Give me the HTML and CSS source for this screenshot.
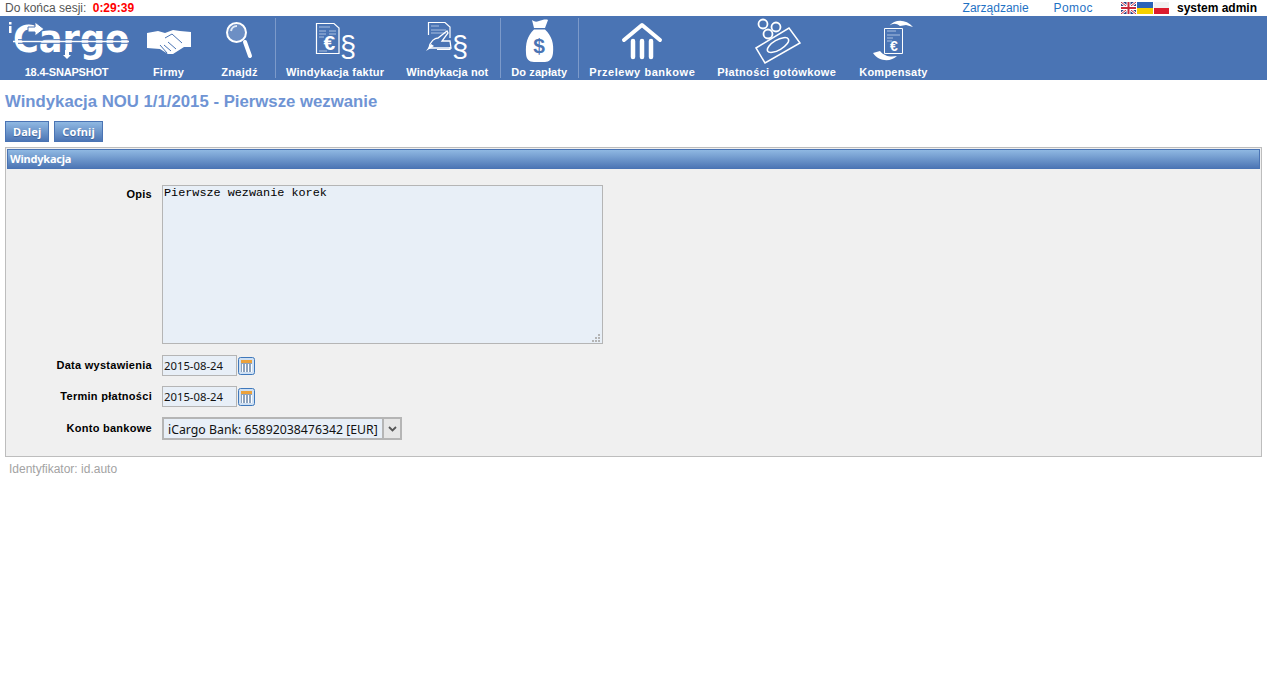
FILE: index.html
```html
<!DOCTYPE html>
<html lang="pl">
<head>
    <meta charset="UTF-8">
    <meta name="viewport" content="width=device-width, initial-scale=1.0">
    <title>Windykacja NOU 1/1/2015</title>
    <link rel="stylesheet" href="styles.css">
</head>
<body>
    <div class="topbar">
        <div class="session">Do końca sesji: <span class="timer">0:29:39</span></div>
        <div class="topbar-right">
            <a class="toplink toplink-admin" href="#">Zarządzanie</a>
            <a class="toplink toplink-help" href="#">Pomoc</a>
            <div class="flags">
                <svg width="15" height="12" viewBox="0 0 15 12">
                    <rect width="15" height="12" fill="#2b3f86"/>
                    <path d="M0 0L15 12M15 0L0 12" stroke="#fff" stroke-width="2.6"/>
                    <path d="M0 0L15 12M15 0L0 12" stroke="#c8283c" stroke-width="1"/>
                    <path d="M7.5 0V12M0 6H15" stroke="#fff" stroke-width="4"/>
                    <path d="M7.5 0V12M0 6H15" stroke="#c8283c" stroke-width="2"/>
                </svg>
                <svg width="16" height="12" viewBox="0 0 16 12">
                    <rect width="16" height="6" fill="#2a63b8"/>
                    <rect y="6" width="16" height="6" fill="#f5d000"/>
                </svg>
                <svg width="15" height="12" viewBox="0 0 15 12">
                    <rect width="15" height="6" fill="#f1f1f1"/>
                    <rect y="6" width="15" height="6" fill="#dc1c2e"/>
                </svg>
            </div>
            <span class="username">system admin</span>
        </div>
    </div>

    <nav class="nav">
        <a class="nav-item nav-logo" href="#">
            <svg class="nav-icon" width="132" height="48" viewBox="0 0 132 48">
                <rect x="8" y="6" width="2.5" height="2.5" fill="#fff"/>
                <rect x="8" y="10" width="2.5" height="7" fill="#fff"/>
                <text class="logo-text" transform="translate(12 36) scale(0.88 0.95)">Cargo</text>
                <path d="M27 11H34V6L43 13L34 20V16H27Z" fill="#fff" stroke="#4a74b4"/>
                <path d="M64 34H68V39H70L66 43L62 39H64Z" fill="#fff"/>
                <path d="M12 25.5H128" stroke="#fff" stroke-width="1.5"/>
                <path d="M17 23.7H127M17 27.3H127" stroke="#4a74b4"/>
            </svg>
            <span class="nav-label nav-label-caps">18.4-SNAPSHOT</span>
        </a>
        <a class="nav-item nav-narrow" href="#">
            <svg class="nav-icon" width="50" height="48" viewBox="0 0 50 48">
                <path d="M3 17L14 15L21 17L29 14L36 15L47 16V31L40 31L29 38L24 38L16 33L3 32Z" fill="#fff"/>
                <path d="M21 22L28 18L38 27M24 26L32 33M20 29L27 35M16 29L23 37" fill="none" stroke="#4a74b4" stroke-width="1"/>
            </svg>
            <span class="nav-label">Firmy</span>
        </a>
        <a class="nav-item nav-narrow" href="#">
            <svg class="nav-icon" width="40" height="48" viewBox="0 0 40 48">
                <circle cx="16.500" cy="16.500" r="9.500" fill="#6d8fc4" stroke="#fff" stroke-width="2"/>
                <path d="M11 15A6 6 0 0 1 17 10" fill="none" stroke="#dfe8f4" stroke-width="2"/>
                <path d="M25 26L30 40" stroke="#fff" stroke-width="4" stroke-linecap="round"/>
            </svg>
            <span class="nav-label">Znajdź</span>
        </a>
        <span class="nav-sep"></span>
        <a class="nav-item" href="#">
            <svg class="nav-icon" width="60" height="48" viewBox="0 0 60 48">
                <path d="M11.5 7.5H29L34 12V37.5H11.5Z" fill="#4a74b4" stroke="#fff" stroke-width="1.2"/>
                <path d="M14 11H25M14 15H21M24 15H31M14 18H21M24 18H31M14 21H19M14 35H22" stroke="#a9bfe0"/>
                <text class="icon-euro" x="18.500" y="34">€</text>
                <text class="icon-para" x="35" y="41">§</text>
            </svg>
            <span class="nav-label">Windykacja faktur</span>
        </a>
        <a class="nav-item nav-item-notes" href="#">
            <svg class="nav-icon" width="60" height="48" viewBox="0 0 60 48">
                <path d="M11.5 19V6.5H28L33 11V22M33 31V33.5H20" fill="none" stroke="#fff" stroke-width="1.2"/>
                <path d="M14 10H22M14 14H29M14 17H29" stroke="#a9bfe0"/>
                <path d="M12 32C13 25 18 22 21 22L30 15L31 17L25 25H33L34 32Z" fill="none" stroke="#fff" stroke-width="1.3"/>
                <path d="M9 35L14 28L17 30Z" fill="#fff"/>
                <text class="icon-para" x="35" y="41">§</text>
            </svg>
            <span class="nav-label nav-label-tight">Windykacja not</span>
        </a>
        <span class="nav-sep"></span>
        <a class="nav-item" href="#">
            <svg class="nav-icon" width="40" height="48" viewBox="0 0 40 48">
                <path d="M13 4C16 6 17 6 20 5C23 4 27 3 29 4L26 12H15Z" fill="#fff"/>
                <path d="M15 13.5H26C33 20 35 28 34 37C33.500 43 30 46 26 46H15C10 46 7 43 7 37C6.500 28 8 20 15 13.500Z" fill="#fff"/>
                <text class="icon-dollar" x="20" y="37">$</text>
            </svg>
            <span class="nav-label nav-label-tight">Do zapłaty</span>
        </a>
        <span class="nav-sep"></span>
        <a class="nav-item" href="#">
            <svg class="nav-icon" width="50" height="48" viewBox="0 0 50 48">
                <path d="M7 24L25 9L43 24" fill="none" stroke="#fff" stroke-width="4" stroke-linecap="round" stroke-linejoin="round"/>
                <path d="M16 25V41M25 25V41M34 25V41" stroke="#fff" stroke-width="4.500" stroke-linecap="round"/>
            </svg>
            <span class="nav-label nav-label-wide">Przelewy bankowe</span>
        </a>
        <a class="nav-item" href="#">
            <svg class="nav-icon" width="60" height="48" viewBox="0 0 60 48">
                <circle cx="16" cy="8" r="4.500" fill="none" stroke="#fff" stroke-width="1.800"/>
                <circle cx="29" cy="11" r="4.500" fill="none" stroke="#fff" stroke-width="1.800"/>
                <circle cx="21" cy="18" r="4.500" fill="none" stroke="#fff" stroke-width="1.800"/>
                <path d="M9 32L42 12L53 27L18 47Z" fill="none" stroke="#fff" stroke-width="1.500"/>
                <ellipse cx="31" cy="29" rx="12" ry="5" transform="rotate(-30 31 29)" fill="none" stroke="#fff" stroke-width="1.500"/>
            </svg>
            <span class="nav-label nav-label-mid">Płatności gotówkowe</span>
        </a>
        <a class="nav-item nav-item-last" href="#">
            <svg class="nav-icon" width="60" height="48" viewBox="0 0 60 48">
                <path d="M21.500 12.500H39.500V37.500H21.500Z" fill="#4a74b4" stroke="#fff"/>
                <path d="M24 15H33M24 19H37M24 22H30M24 25H29" stroke="#a9bfe0"/>
                <text class="icon-euro icon-euro-small" x="27" y="35">€</text>
                <path d="M26 10C32 3 43 3 50 11L43 9L37 10C33 7 30 7 26 10Z" fill="#fff"/>
                <path d="M10 37L17 35C22 41 28 41 34 40C28 46 16 46 10 37Z" fill="#fff"/>
            </svg>
            <span class="nav-label">Kompensaty</span>
        </a>
    </nav>

    <main class="content">
        <h1 class="page-title">Windykacja NOU 1/1/2015 - Pierwsze wezwanie</h1>

        <div class="actions">
            <button class="btn">Dalej</button>
            <button class="btn">Cofnij</button>
        </div>

        <section class="panel">
            <h2 class="panel-header">Windykacja</h2>
            <form class="form">
                <label class="form-label form-label-top">Opis</label>
                <div class="textarea-wrap">
                    <textarea class="textarea" spellcheck="false">Pierwsze wezwanie korek</textarea>
                    <svg class="grip" width="8" height="8" viewBox="0 0 8 8">
                        <path d="M6 0h2v2h-2zM3 3h2v2h-2zM6 3h2v2h-2zM0 6h2v2h-2zM3 6h2v2h-2zM6 6h2v2h-2z" fill="#b4b4b4"/>
                    </svg>
                </div>

                <label class="form-label">Data wystawienia</label>
                <div class="date-field">
                    <input class="input" type="text" value="2015-08-24">
                    <svg class="calendar" width="17" height="18" viewBox="0 0 17 18">
                        <rect x="0.500" y="0.500" width="16" height="17" rx="2" fill="#cfe0f3" stroke="#3f78bb"/>
                        <rect x="3" y="3" width="11" height="3" fill="#eda23a"/>
                        <rect x="3" y="6" width="11" height="9" fill="#8ea3bd"/>
                        <path d="M4.500 7V15M7.500 7V15M10.500 7V15M13.500 7V15" stroke="#fff"/>
                    </svg>
                </div>

                <label class="form-label">Termin płatności</label>
                <div class="date-field">
                    <input class="input" type="text" value="2015-08-24">
                    <svg class="calendar" width="17" height="18" viewBox="0 0 17 18">
                        <rect x="0.500" y="0.500" width="16" height="17" rx="2" fill="#cfe0f3" stroke="#3f78bb"/>
                        <rect x="3" y="3" width="11" height="3" fill="#eda23a"/>
                        <rect x="3" y="6" width="11" height="9" fill="#8ea3bd"/>
                        <path d="M4.500 7V15M7.500 7V15M10.500 7V15M13.500 7V15" stroke="#fff"/>
                    </svg>
                </div>

                <label class="form-label">Konto bankowe</label>
                <div class="select-box">
                    <span class="select-value">iCargo Bank: 65892038476342 [EUR]</span>
                    <span class="select-arrow">
                        <svg width="9" height="6" viewBox="0 0 9 6"><path d="M1 1L4.500 4.500L8 1" fill="none" stroke="#555" stroke-width="1.800"/></svg>
                    </span>
                </div>
            </form>
        </section>

        <div class="identifier">Identyfikator: id.auto</div>
    </main>
</body>
</html>
```

FILE: styles.css
```css
body {
  margin: 0;
  background-color: #fff;
  font-family: 'Liberation Sans', Arial, sans-serif;
  font-size: 12px;
  color: #000;
}

a {
  text-decoration: none;
}

/* top strip */
.topbar {
  display: flex;
  justify-content: space-between;
  align-items: center;
  height: 16px;
  padding: 0 10px 0 5px;
}

.session {
  color: #555;
}

.timer {
  margin-left: 3px;
  color: #f00;
  font-weight: bold;
}

.topbar-right {
  display: flex;
  align-items: center;
}

.toplink {
  color: #1f72c4;
}

.toplink-admin {
  margin-right: 25px;
}

.toplink-help {
  margin-right: 28px;
  letter-spacing: 0.4px;
}

.flags {
  display: flex;
  gap: 1px;
  margin-right: 8px;
}

.username {
  font-weight: bold;
}

/* main navigation */
.nav {
  display: flex;
  height: 64px;
  background-color: #4a74b4;
}

.nav-item {
  display: flex;
  flex-direction: column;
  align-items: center;
  padding: 0 11px;
  color: #fff;
}

.nav-logo {
  width: 133px;
  padding: 0;
}

.nav-narrow {
  width: 71px;
  padding: 0;
}

.nav-item-notes {
  padding-right: 12px;
}

.nav-item-last {
  margin-left: 1px;
}

.nav-icon {
  display: block;
  height: 48px;
  flex: none;
}

.nav-label {
  margin-top: 2px;
  font-size: 11px;
  line-height: 13px;
  font-weight: bold;
  letter-spacing: 0.25px;
  white-space: nowrap;
}

.nav-label-caps {
  letter-spacing: -0.2px;
}

.nav-label-tight {
  letter-spacing: 0.1px;
}

.nav-label-mid {
  letter-spacing: 0.37px;
}

.nav-label-wide {
  letter-spacing: 0.55px;
}

.nav-sep {
  width: 1px;
  margin: 2px -1px 2px 0;
  background-color: #7c9aca;
}

.logo-text {
  font-family: 'DejaVu Sans', sans-serif;
  font-size: 40px;
  font-weight: bold;
  fill: #fff;
}

.icon-euro {
  font-family: 'Liberation Sans', sans-serif;
  font-size: 21px;
  font-weight: bold;
  fill: #fff;
}

.icon-euro-small {
  font-size: 14px;
}

.icon-para {
  font-family: 'Liberation Sans', sans-serif;
  font-size: 29px;
  fill: #fff;
}

.icon-dollar {
  font-family: 'Liberation Sans', sans-serif;
  font-size: 21px;
  font-weight: bold;
  fill: #4a74b4;
  text-anchor: middle;
}

/* page content */
.content {
  padding: 0 5px;
}

.page-title {
  margin: 12px 0 0;
  font-size: 16.750px;
  line-height: 19px;
  font-weight: bold;
  color: #6f94d4;
}

.actions {
  display: flex;
  gap: 5px;
  margin-top: 10px;
}

.btn {
  height: 21px;
  padding: 0 7px;
  border: 1px solid #4a74b4;
  background: linear-gradient(#8fb8e2, #4d76b5);
  color: #fff;
  font-family: 'Noto Sans', sans-serif;
  font-size: 11px;
  font-weight: bold;
  letter-spacing: 0.1px;
  text-shadow: 0 1px 1px #3a5f99;
}

.panel {
  margin-top: 5px;
  padding: 1px;
  border: 1px solid #bdbdbd;
  background-color: #f0f0f0;
}

.panel-header {
  margin: 0;
  height: 18px;
  padding-left: 2px;
  border: 1px solid #4a74b4;
  background: linear-gradient(#8fb8e2, #4d76b5);
  color: #fff;
  font-family: 'Noto Sans', sans-serif;
  font-size: 11px;
  line-height: 18px;
  font-weight: bold;
  letter-spacing: -0.2px;
}

.form {
  display: grid;
  grid-template-columns: 145px auto;
  column-gap: 10px;
  row-gap: 10px;
  justify-content: start;
  align-items: center;
  padding: 16px 0 15px;
}

.form-label {
  margin-bottom: 2px;
  text-align: right;
  font-size: 11px;
  font-weight: bold;
  letter-spacing: 0.28px;
}

.form-label-top {
  align-self: start;
  margin-top: 3px;
}

.textarea-wrap {
  position: relative;
  margin-bottom: 1px;
}

.textarea {
  display: block;
  box-sizing: border-box;
  width: 441px;
  height: 159px;
  padding: 0 1px;
  border: 1px solid #b5b5b5;
  border-radius: 0;
  background-color: #e8eff7;
  font-family: 'Liberation Mono', monospace;
  font-size: 11.800px;
  line-height: 14px;
  resize: none;
}

.grip {
  position: absolute;
  right: 3px;
  bottom: 2px;
}

.date-field {
  display: flex;
  align-items: flex-start;
  gap: 1px;
}

.calendar {
  margin-top: 2px;
}

.input {
  box-sizing: border-box;
  width: 75px;
  height: 21px;
  padding: 0 1px;
  border: 1px solid #b5b5b5;
  background-color: #e8eff7;
  font-family: 'Noto Sans', sans-serif;
  font-size: 11.300px;
  color: #111;
}

.select-box {
  display: flex;
  box-sizing: border-box;
  width: 240px;
  height: 23px;
  border: 2px solid #b5b5b5;
  background-color: #e8eff7;
}

.select-value {
  flex: 1;
  padding-left: 4px;
  font-family: 'Noto Sans', sans-serif;
  font-size: 12.300px;
  line-height: 21px;
  white-space: nowrap;
  color: #111;
}

.select-arrow {
  display: flex;
  align-items: center;
  justify-content: center;
  width: 16px;
  border-left: 2px solid #b5b5b5;
  background-color: #e6e6e6;
}

.identifier {
  margin: 5px 0 0 4px;
  color: #a3a3a3;
}
```
